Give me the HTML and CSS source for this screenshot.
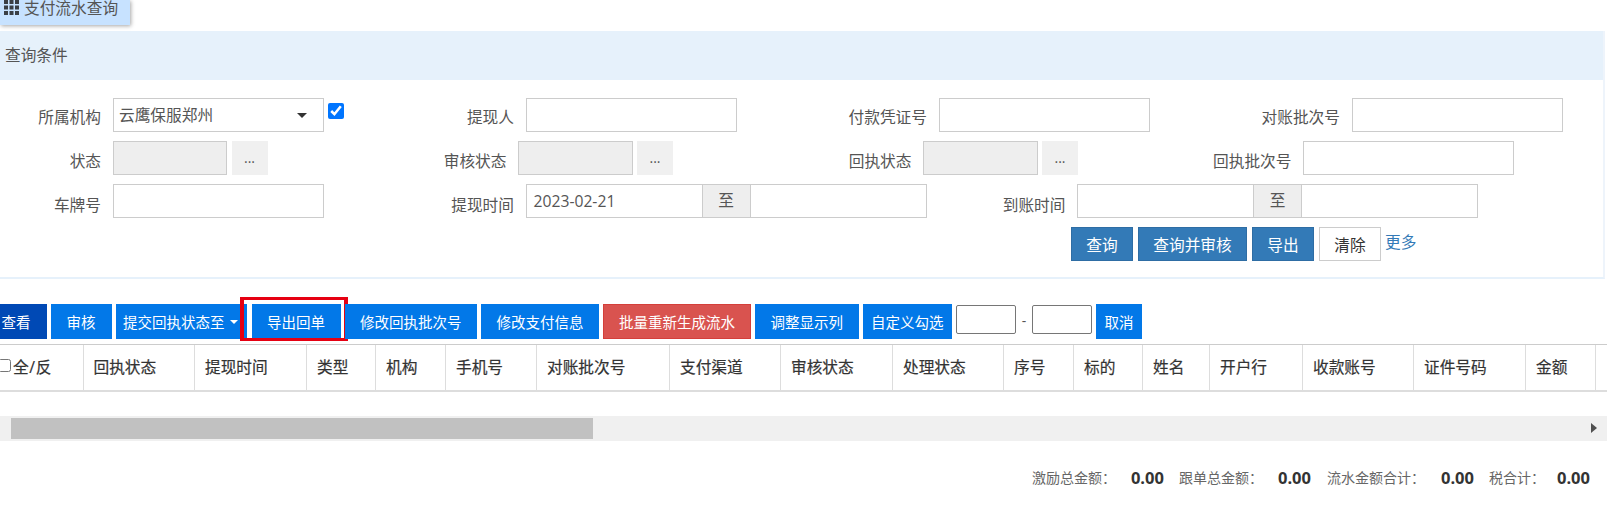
FILE: index.html
```html
<!DOCTYPE html>
<html lang="zh-CN">
<head>
<meta charset="utf-8">
<title>支付流水查询</title>
<link rel="stylesheet" href="styles.css">
</head>
<body>
<div class="tab">
  <svg class="tab-icon" width="15" height="15" viewBox="0 0 15 15"><path fill="#3a3f45" d="M0 0h4v4H0zM5.500 0h4v4h-4zM11 0h4v4h-4zM0 5.500h4v4H0zM5.500 5.500h4v4h-4zM11 5.500h4v4h-4zM0 11h4v4H0zM5.500 11h4v4h-4zM11 11h4v4h-4z"/></svg>
  <span>支付流水查询</span>
</div>
<section class="panel">
  <div class="panel-head">查询条件</div>
  <div class="form">
    <div class="row">
      <div class="field w-a"><label>所属机构</label>
        <div class="select">云鹰保服郑州<i class="caret"></i></div>
        <input class="check" type="checkbox" checked>
      </div>
      <div class="field w-a"><label>提现人</label><div class="input"></div></div>
      <div class="field w-a"><label>付款凭证号</label><div class="input"></div></div>
      <div class="field"><label>对账批次号</label><div class="input"></div></div>
    </div>
    <div class="row row-mid">
      <div class="field w-b"><label>状态</label><div class="input short disabled"></div><div class="more-btn">...</div></div>
      <div class="field w-b2"><label>审核状态</label><div class="input short disabled"></div><div class="more-btn">...</div></div>
      <div class="field w-c"><label>回执状态</label><div class="input short disabled"></div><div class="more-btn">...</div></div>
      <div class="field"><label>回执批次号</label><div class="input"></div></div>
    </div>
    <div class="row row-low">
      <div class="field w-a"><label>车牌号</label><div class="input"></div></div>
      <div class="field w-d"><label>提现时间</label>
        <div class="range"><div class="input half">2023-02-21</div><div class="to">至</div><div class="input half"></div></div>
      </div>
      <div class="field"><label>到账时间</label>
        <div class="range"><div class="input half"></div><div class="to">至</div><div class="input half"></div></div>
      </div>
    </div>
    <div class="actions">
      <button class="btn primary">查询</button>
      <button class="btn primary long">查询并审核</button>
      <button class="btn primary">导出</button>
      <button class="btn plain">清除</button>
      <a class="more-link">更多</a>
    </div>
  </div>
</section>
<div class="toolbar">
  <button class="tbtn wide dark first">查看</button>
  <button class="tbtn wide">审核</button>
  <button class="tbtn drop">提交回执状态至<i class="caret white"></i></button>
  <button class="tbtn marked">导出回单</button>
  <button class="tbtn">修改回执批次号</button>
  <button class="tbtn">修改支付信息</button>
  <button class="tbtn danger">批量重新生成流水</button>
  <button class="tbtn">调整显示列</button>
  <button class="tbtn tight">自定义勾选</button>
  <input class="num" type="text">
  <span class="dash">-</span>
  <input class="num" type="text">
  <button class="tbtn tight">取消</button>
</div>
<div class="thead">
  <div class="th first-col"><input class="all" type="checkbox">全/反</div>
  <div class="th">回执状态</div>
  <div class="th">提现时间</div>
  <div class="th">类型</div>
  <div class="th">机构</div>
  <div class="th">手机号</div>
  <div class="th">对账批次号</div>
  <div class="th">支付渠道</div>
  <div class="th">审核状态</div>
  <div class="th">处理状态</div>
  <div class="th">序号</div>
  <div class="th">标的</div>
  <div class="th">姓名</div>
  <div class="th">开户行</div>
  <div class="th">收款账号</div>
  <div class="th">证件号码</div>
  <div class="th">金额</div>
  <div class="th"></div>
</div>
<div class="scrollbar">
  <div class="thumb"></div>
  <i class="arrow"></i>
</div>
<div class="totals">
  <span class="t-label">激励总金额：</span><b>0.00</b>
  <span class="t-label">跟单总金额：</span><b>0.00</b>
  <span class="t-label flow">流水金额合计：</span><b>0.00</b>
  <span class="t-label tax">税合计：</span><b>0.00</b>
</div>
</body>
</html>
```
FILE: styles.css
```css
* { box-sizing: border-box; }
html, body { margin: 0; padding: 0; }
body {
  width: 1607px;
  height: 512px;
  overflow: hidden;
  background: #fff;
  color: #555;
  font-family: "Open Sans", "Noto Sans CJK SC", sans-serif;
  font-size: 15.7px;
}
.tab {
  display: flex;
  align-items: flex-start;
  gap: 5px;
  width: 130px;
  height: 25px;
  padding-left: 4px;
  background: #c7e2ff;
  box-shadow: 1px 1px 4px rgba(0,0,0,.35);
  line-height: 16px;
}
.tab-icon { flex: none; }
.panel {
  margin-top: 6px;
  width: 1605px;
  height: 248px;
  border-right: 2px solid #eef4fb;
  border-bottom: 2px solid #e6f1fb;
}
.panel-head {
  height: 49px;
  padding-left: 5px;
  line-height: 48px;
  background: #e6f1fb;
}
.form { padding-top: 18px; }
.row { display: flex; height: 34px; margin-bottom: 9px; }
.field { display: flex; flex: none; }
.w-a { width: 413px; }
.w-b { width: 405.5px; }
.w-b2 { width: 405px; }
.w-c { width: 380px; }
.w-d { width: 551.5px; }
.field label {
  width: 101px;
  margin-right: 11.5px;
  padding-top: 4px;
  line-height: 30px;
  text-align: right;
  flex: none;
}
.row-mid label { padding-top: 5px; }
.row-low label { padding-top: 6px; }
.input, .select {
  width: 211px;
  height: 34px;
  border: 1px solid #ccc;
  background: #fff;
  line-height: 32px;
  padding-left: 7px;
  flex: none;
}
.select { position: relative; padding-left: 5.5px; }
.caret {
  position: absolute;
  right: 16px;
  top: 14px;
  border-style: solid;
  border-width: 5px 5px 0;
  border-color: #333 transparent transparent;
}
.check { width: 16px; height: 16px; margin: 5px 0 0 4px; }
.short { width: 114.5px; }
.disabled { background: #eee; }
.more-btn {
  width: 36px;
  height: 34px;
  margin-left: 4.5px;
  background: #f0f0f0;
  text-align: center;
  line-height: 34px;
  font-size: 14px;
}
.range { display: flex; }
.half { width: 177px; }
.to {
  width: 47px;
  height: 34px;
  border: 1px solid #ccc;
  border-width: 1px 0;
  background: #eee;
  text-align: center;
  line-height: 30px;
}
.actions {
  display: flex;
  align-items: flex-start;
  gap: 5px;
  padding-left: 1071px;
}
.btn {
  width: 62px;
  height: 34px;
  padding: 0;
  font: inherit;
  border: 1px solid #2e6da4;
  background: #337ab7;
  color: #fff;
}
.btn.long { width: 109px; }
.btn.plain { background: #fff; border-color: #ccc; color: #333; }
.more-link { margin-left: -1px; color: #337ab7; line-height: 30px; }
.toolbar {
  position: relative;
  display: flex;
  align-items: flex-start;
  gap: 4px;
  margin-top: 25px;
  height: 35px;
}
.tbtn {
  position: relative;
  height: 35px;
  padding: 0 15.5px;
  border: 0;
  background: #0278e8;
  color: #fff;
  font-family: inherit;
  font-size: 14.5px;
  flex: none;
}
.wide { padding: 0 16px; }
.first { margin-left: -14.5px; }
.dark { background: #0049b5; }
.drop { padding: 0 9.5px 0 7.5px; display: flex; align-items: center; gap: 5px; }
.caret.white {
  position: static;
  border-top-color: #fff;
  border-width: 4px 4px 0;
}
.danger { background: #d9534f; border: 1px solid #d43f3a; padding: 0 15px; }
.tight { padding: 0 8.5px; }
.marked { margin-left: .5px; }
.marked::after {
  content: "";
  position: absolute;
  left: -12px;
  right: -7px;
  top: -7px;
  bottom: -2px;
  border: solid #e60012;
  border-width: 3px 4px;
}
.num {
  width: 60px;
  height: 29px;
  margin-top: 1px;
  border: 1px solid #767676;
  border-radius: 2px;
  background: #fff;
  flex: none;
}
.dash { width: 16px; margin: 0 -4px; text-align: center; line-height: 33px; font-size: 14px; }
.thead {
  display: grid;
  grid-template-columns: 82.5px 111.5px 112px 69px 70px 91px 133px 111px 112px 111px 70px 69px 67px 93px 111px 112px 70px 12px;
  height: 48px;
  margin-top: 5px;
  border-top: 1px solid #ccc;
  border-bottom: 2px solid #ddd;
  color: #333;
  font-size: 15.7px;
  -webkit-text-stroke: .2px #333;
}
.th {
  padding-left: 10px;
  border-left: 1px solid #ddd;
  line-height: 45px;
  white-space: nowrap;
}
.first-col { display: flex; padding-left: 0; border-left: 0; letter-spacing: .6px; }
.all { width: 13px; height: 13px; margin: 14px 2px 0 -2px; flex: none; }
.scrollbar {
  position: relative;
  height: 25px;
  margin-top: 24px;
  padding: 2px 0 0 11px;
  background: #f0f0f0;
}
.thumb { width: 582px; height: 21px; background: #c1c1c1; }
.arrow {
  position: absolute;
  right: 10px;
  top: 7px;
  border-style: solid;
  border-width: 5.5px 0 5.5px 6px;
  border-color: transparent transparent transparent #505050;
}
.totals {
  display: flex;
  justify-content: flex-end;
  align-items: center;
  margin-top: 25px;
  height: 22px;
  padding-right: 17px;
  font-size: 14px;
  color: #666;
}
.t-label { margin-left: 15px; margin-right: 15px; }
.t-label.flow { margin-left: 16px; margin-right: 16px; }
.t-label.tax { margin-right: 12px; }
.totals b { font-size: 16.5px; color: #333; }
```
